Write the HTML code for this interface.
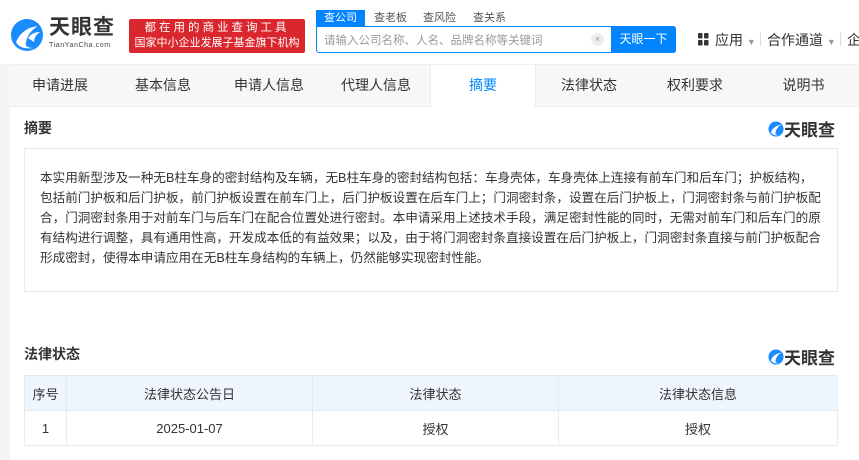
<!DOCTYPE html>
<html><head><meta charset="utf-8"><style>
*{margin:0;padding:0;box-sizing:border-box}
body{width:859px;height:460px;overflow:hidden;background:#fff;font-family:"Liberation Sans","Noto Sans CJK SC",sans-serif;color:#333;position:relative}
.abs{position:absolute}
.tabs{left:10px;top:65px;width:849px;height:42px;background:#f7f7f7;border-bottom:1px solid #eee}
.tab{position:absolute;top:0;height:42px;line-height:40px;font-size:14px;color:#333;text-align:center}
.hd{font-size:14px;font-weight:bold;color:#333}
table{border-collapse:collapse;font-size:13px}
td,th{border:1px solid #e3ecf5;text-align:center;font-weight:normal;color:#333}
th{background:#eef5fc;height:35px}
td{height:35px}
.logo2{font-size:17px;font-weight:bold;color:#333}
</style></head><body>
<svg class="abs" style="left:10px;top:18px" width="34" height="34" viewBox="0 0 34 34"><circle cx="17" cy="17" r="16" fill="#1a8cff"/><path d="M6 24 Q12 10 28 8 Q18 14 16 24 Q14 30 24 30 Q10 32 6 24Z" fill="#fff"/><path d="M18 20 Q22 14 30 14 Q24 18 24 24Z" fill="#fff"/></svg>
<div class="abs" style="left:49px;top:16px;font-size:21px;line-height:24px;font-weight:bold;color:#333;letter-spacing:1px">天眼查</div>
<div class="abs" style="left:49px;top:42px;font-size:7px;line-height:8px;color:#444;letter-spacing:.6px">TianYanCha.com</div>
<div class="abs" style="left:129px;top:19px;width:176px;height:34px;background:#d9272d;border-radius:2px;color:#fff;text-align:center">
<div style="font-size:11.5px;line-height:15px;margin-top:2px;letter-spacing:3px">都在用的商业查询工具</div>
<div style="font-size:11px;line-height:15px">国家中小企业发展子基金旗下机构</div></div>
<div class="abs" style="left:316px;top:10px;width:49px;height:16px;background:#0084ff;color:#fff;font-size:11px;text-align:center;line-height:16px">查公司</div>
<div class="abs" style="left:374px;top:10px;font-size:11px;color:#555;line-height:16px">查老板</div>
<div class="abs" style="left:423px;top:10px;font-size:11px;color:#555;line-height:16px">查风险</div>
<div class="abs" style="left:473px;top:10px;font-size:11px;color:#555;line-height:16px">查关系</div>
<div class="abs" style="left:316px;top:26px;width:360px;height:27px;border:1px solid #0084ff;border-radius:0 3px 3px 3px;background:#fff"></div>
<div class="abs" style="left:324px;top:32px;font-size:11.5px;color:#999">请输入公司名称、人名、品牌名称等关键词</div>
<div class="abs" style="left:591px;top:33px;width:13px;height:13px;border-radius:50%;background:#eee;color:#999;font-size:9px;text-align:center;line-height:13px">×</div>
<div class="abs" style="left:611px;top:26px;width:65px;height:27px;background:#0084ff;color:#fff;font-size:12px;text-align:center;line-height:27px;border-radius:0 3px 3px 0">天眼一下</div>
<svg class="abs" style="left:698px;top:33px" width="11" height="13"><rect x="0" y="0" width="4.5" height="5.5" rx="1" fill="#333"/><rect x="6" y="0" width="4.5" height="5.5" rx="1" fill="#333"/><rect x="0" y="7" width="4.5" height="5.5" rx="1" fill="#333"/><rect x="6" y="7" width="4.5" height="5.5" rx="1" fill="#333"/></svg>
<div class="abs" style="left:715px;top:30px;font-size:14px;color:#333">应用 <span style="font-size:9px;color:#999">▼</span></div>
<div class="abs" style="left:760px;top:32px;width:1px;height:14px;background:#ddd"></div>
<div class="abs" style="left:767px;top:30px;font-size:14px;color:#333">合作通道 <span style="font-size:9px;color:#999">▼</span></div>
<div class="abs" style="left:840px;top:32px;width:1px;height:14px;background:#ddd"></div>
<div class="abs" style="left:847px;top:30px;font-size:14px;color:#333">企</div>
<div class="abs" style="left:0;top:64px;width:10px;height:396px;background:#f5f5f5"></div>
<div class="abs" style="left:10px;top:64px;width:849px;height:1px;background:#eee"></div>
<div class="abs tabs">
<div class="tab" style="left:0;width:100px">申请进展</div>
<div class="tab" style="left:100px;width:106px">基本信息</div>
<div class="tab" style="left:206px;width:106px">申请人信息</div>
<div class="tab" style="left:312px;width:108px">代理人信息</div>
<div class="tab" style="left:420px;width:106px;background:#fff;color:#0084ff;border-left:1px solid #eee;border-right:1px solid #eee;height:42px">摘要</div>
<div class="tab" style="left:526px;width:106px">法律状态</div>
<div class="tab" style="left:632px;width:106px">权利要求</div>
<div class="tab" style="left:738px;width:111px">说明书</div>
</div>
<div class="abs hd" style="left:24px;top:118px">摘要</div>
<div class="abs" style="left:768px;top:116px;display:flex;align-items:center"><svg width="16" height="16" viewBox="0 0 34 34"><circle cx="17" cy="17" r="16" fill="#1a8cff"/><path d="M6 24 Q12 10 28 8 Q18 14 16 24 Q14 30 24 30 Q10 32 6 24Z" fill="#fff"/></svg><span class="logo2">天眼查</span></div>
<div class="abs" style="left:24px;top:148px;width:814px;height:144px;border:1px solid #e3ecf5"></div>
<div class="abs" style="left:40px;top:168px;width:790px;font-size:12.6px;line-height:20px;color:#333;white-space:nowrap">本实用新型涉及一种无B柱车身的密封结构及车辆，无B柱车身的密封结构包括：车身壳体，车身壳体上连接有前车门和后车门；护板结构，<br>包括前门护板和后门护板，前门护板设置在前车门上，后门护板设置在后车门上；门洞密封条，设置在后门护板上，门洞密封条与前门护板配<br>合，门洞密封条用于对前车门与后车门在配合位置处进行密封。本申请采用上述技术手段，满足密封性能的同时，无需对前车门和后车门的原<br>有结构进行调整，具有通用性高，开发成本低的有益效果；以及，由于将门洞密封条直接设置在后门护板上，门洞密封条直接与前门护板配合<br>形成密封，使得本申请应用在无B柱车身结构的车辆上，仍然能够实现密封性能。</div>
<div class="abs hd" style="left:24px;top:344px">法律状态</div>
<div class="abs" style="left:768px;top:344px;display:flex;align-items:center"><svg width="16" height="16" viewBox="0 0 34 34"><circle cx="17" cy="17" r="16" fill="#1a8cff"/><path d="M6 24 Q12 10 28 8 Q18 14 16 24 Q14 30 24 30 Q10 32 6 24Z" fill="#fff"/></svg><span class="logo2">天眼查</span></div>
<table class="abs" style="left:24px;top:375px;width:814px">
<tr><th style="width:42px">序号</th><th style="width:246px">法律状态公告日</th><th style="width:246px">法律状态</th><th>法律状态信息</th></tr>
<tr><td>1</td><td>2025-01-07</td><td>授权</td><td>授权</td></tr>
</table>
</body></html>
